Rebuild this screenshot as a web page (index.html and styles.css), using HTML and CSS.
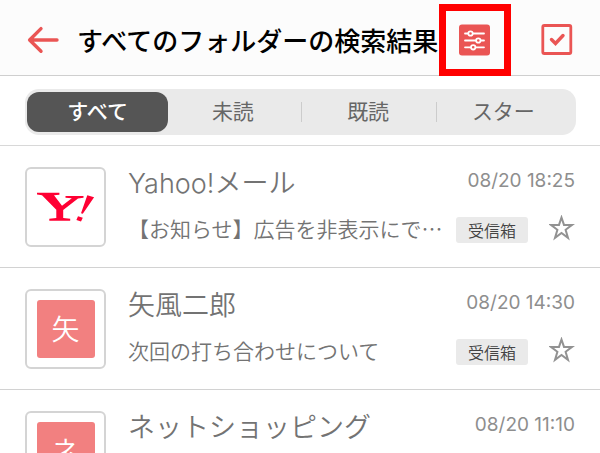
FILE: index.html
```html
<!DOCTYPE html>
<html lang="ja">
<head>
    <meta charset="UTF-8">
    <meta name="viewport" content="width=device-width, initial-scale=1.0">
    <title>すべてのフォルダーの検索結果</title>
    <link rel="stylesheet" href="styles.css">
</head>
<body>
    <header class="header">
        <button class="icon-button" type="button" aria-label="戻る">
            <svg width="32" height="32" viewBox="0 0 32 32" fill="none" stroke="#ea5554" stroke-width="3.4" stroke-linecap="round" stroke-linejoin="round">
                <path d="M30 16H3M14 4.6L2.6 16 14 27.2"/>
            </svg>
        </button>
        <h1 class="title">すべてのフォルダーの検索結果</h1>
        <div class="actions">
            <button class="icon-button marked" type="button" aria-label="絞り込み">
                <svg width="32" height="32" viewBox="0 0 32 32">
                    <rect x="0" y="0.5" width="31" height="31" rx="3" fill="#ea5554"/>
                    <g stroke="#fff" stroke-width="1.8" stroke-linecap="round" fill="#ea5554">
                        <path d="M6 9.5h19M6 16.5h19M6 23.3h19"/>
                        <circle cx="11.5" cy="9.5" r="2.2"/>
                        <circle cx="19.3" cy="16.5" r="2.2"/>
                        <circle cx="14.2" cy="23.3" r="2.2"/>
                    </g>
                </svg>
            </button>
            <button class="icon-button" type="button" aria-label="選択">
                <svg width="32" height="32" viewBox="0 0 32 32" fill="none" stroke="#ea5554">
                    <rect x="1.8" y="1.5" width="28" height="28" rx="1.5" stroke-width="2.8"/>
                    <path d="M10.5 15.5l4 4 7.5-8" stroke-width="3.4" stroke-linecap="round"/>
                </svg>
            </button>
        </div>
    </header>

    <nav class="filter">
        <div class="tabs">
            <button class="tab active" type="button">すべて</button>
            <button class="tab" type="button">未読</button>
            <button class="tab" type="button">既読</button>
            <button class="tab" type="button">スター</button>
        </div>
    </nav>

    <main class="mail-list">
        <article class="mail">
            <div class="avatar">
                <svg width="60" height="30" viewBox="0 0 60 30" fill="#ff0033" role="img" aria-label="Yahoo!">
                    <path d="M1 .8h22.4v2L18 3.2l8 10.5 9.8-7.5L29.5 5.8V4H47.5v1.8L42 6.5 27.2 18V26l7 .8v1.9H13.3v-1.9l7-.8v-8.2L6 3.2 1 2.6z"/>
                    <path d="M51.3 3.2l6.8 2.1L46.8 21.8l-1.8-.6zM42 24.2l4.8 1.6-1.8 3.6-4.6-1.5z"/>
                </svg>
            </div>
            <div class="mail-body">
                <div class="line">
                    <h2 class="sender">Yahoo!メール</h2>
                    <time class="date">08/20 18:25</time>
                </div>
                <div class="line">
                    <p class="subject">【お知らせ】広告を非表示にで…</p>
                    <span class="folder">受信箱</span>
                    <button class="star" type="button" aria-label="スター">
                        <svg width="26" height="26" viewBox="0 0 26 26" fill="none" stroke="#929292" stroke-width="2">
                            <path d="M12.5 2.5l2.5 7.4h8.1l-6.5 4.9 2.4 8-6.5-4.8-6.5 4.8 2.4-8-6.5-4.9H10z"/>
                        </svg>
                    </button>
                </div>
            </div>
        </article>

        <article class="mail">
            <div class="avatar"><span class="initial">矢</span></div>
            <div class="mail-body">
                <div class="line">
                    <h2 class="sender">矢風二郎</h2>
                    <time class="date">08/20 14:30</time>
                </div>
                <div class="line">
                    <p class="subject">次回の打ち合わせについて</p>
                    <span class="folder">受信箱</span>
                    <button class="star" type="button" aria-label="スター">
                        <svg width="26" height="26" viewBox="0 0 26 26" fill="none" stroke="#929292" stroke-width="2">
                            <path d="M12.5 2.5l2.5 7.4h8.1l-6.5 4.9 2.4 8-6.5-4.8-6.5 4.8 2.4-8-6.5-4.9H10z"/>
                        </svg>
                    </button>
                </div>
            </div>
        </article>

        <article class="mail">
            <div class="avatar"><span class="initial">ネ</span></div>
            <div class="mail-body">
                <div class="line">
                    <h2 class="sender">ネットショッピング</h2>
                    <time class="date">08/20 11:10</time>
                </div>
            </div>
        </article>
    </main>
</body>
</html>
```

FILE: styles.css
```css
* {
    margin: 0;
    padding: 0;
    box-sizing: border-box;
}

body {
    display: flex;
    flex-direction: column;
    height: 100vh;
    overflow: hidden;
    background: #fff;
    color: #737373;
    font-family: "Noto Sans CJK JP", sans-serif;
}

button {
    border: none;
    background: none;
    font-family: inherit;
    cursor: pointer;
}

svg {
    display: block;
}

/* ヘッダー */
.header {
    display: flex;
    flex-shrink: 0;
    align-items: center;
    gap: 18px;
    height: 76px;
    padding: 4px 27px 0;
    background: #fcfcfc;
    border-bottom: 1px solid #cfcfcf;
}

.icon-button {
    flex-shrink: 0;
}

.title {
    flex: 1;
    min-width: 0;
    color: #000;
    font-size: 26px;
    font-weight: 500;
    line-height: 40px;
    white-space: nowrap;
}

.actions {
    display: flex;
    gap: 50px;
}

/* 絞り込みボタンの赤枠 */
.marked {
    position: relative;
}

.marked::after {
    content: "";
    position: absolute;
    inset: -20px;
    border: 7px solid #ff0000;
}

/* 絞り込みタブ */
.filter {
    flex-shrink: 0;
    padding: 13px 24px 10px 25px;
    border-bottom: 1px solid #d8d8d8;
}

.tabs {
    display: grid;
    grid-template-columns: repeat(4, 1fr);
    padding: 3px 5px;
    background: #eaeaea;
    border-radius: 14px;
}

.tab {
    height: 40px;
    padding-bottom: 4px;
    color: #666;
    font-size: 21px;
    line-height: 36px;
}

.tab.active {
    margin: 0 -3px;
    background: #555;
    border-radius: 12px;
    color: #fff;
    font-weight: 500;
}

.tab:not(.active) + .tab {
    background: linear-gradient(#ccc, #ccc) left center / 1px 20px no-repeat;
}

/* メール一覧 */
.mail-list {
    flex: 1;
    min-height: 0;
    overflow: hidden;
}

.mail {
    display: flex;
    gap: 22px;
    padding: 21px 25px 20px;
    border-bottom: 1px solid #d2d2d2;
}

.avatar {
    display: flex;
    flex-shrink: 0;
    align-items: center;
    justify-content: center;
    width: 81px;
    height: 80px;
    border: 2px solid #d4d4d4;
    border-radius: 6px;
}

.initial {
    width: 58px;
    height: 58px;
    background: #f28080;
    border-radius: 3px;
    color: #fff;
    font-size: 28px;
    font-weight: 350;
    line-height: 56px;
    text-align: center;
}

.mail-body {
    flex: 1;
    min-width: 0;
}

.line {
    display: flex;
    align-items: center;
}

.line + .line {
    margin-top: 13px;
}

.sender {
    flex: 1;
    padding-top: 2px;
    font-family: Inter, "Noto Sans CJK JP", sans-serif;
    font-size: 27px;
    font-weight: 350;
    line-height: 30px;
    white-space: nowrap;
}

.date {
    padding-bottom: 5px;
    color: #8e8e8e;
    font-family: Inter, "Liberation Sans", sans-serif;
    font-size: 19px;
    line-height: 24px;
}

.subject {
    flex: 1;
    min-width: 0;
    font-size: 21px;
    font-weight: 350;
    line-height: 32px;
    white-space: nowrap;
}

.folder {
    margin: 4px 21px 0 12px;
    padding: 0 12px;
    background: #eaeaea;
    border-radius: 3px;
    color: #444;
    font-size: 16px;
    font-weight: 350;
    line-height: 26px;
}
```
